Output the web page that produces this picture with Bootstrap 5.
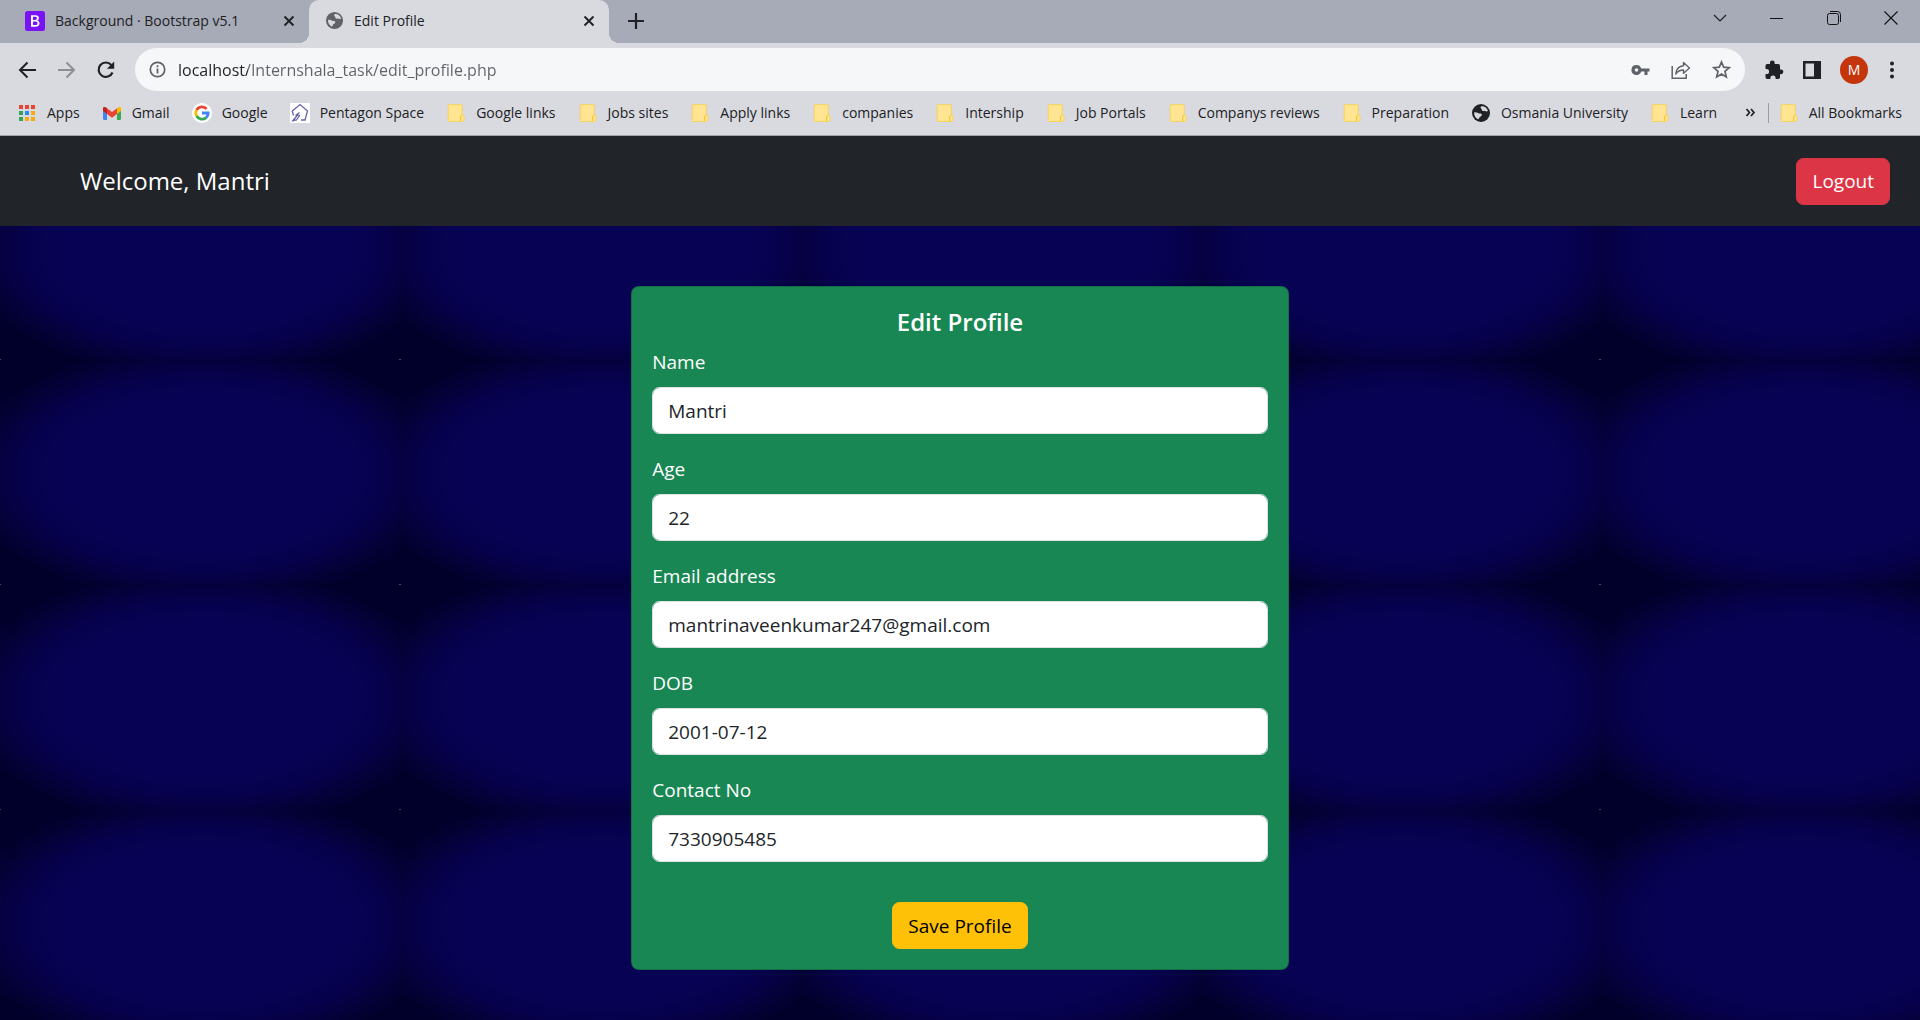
<!DOCTYPE html>
<html lang="en">
<head>
<meta charset="utf-8">
<meta name="viewport" content="width=device-width, initial-scale=1">
<title>Edit Profile</title>
<link href="https://cdn.jsdelivr.net/npm/bootstrap@5.3.0/dist/css/bootstrap.min.css" rel="stylesheet">
<style>
  html { font-size: 20px; }
  body {
    --bs-body-font-family: "Open Sans", "Noto Sans", sans-serif;
    font-size: 19px; line-height: 30px; min-height: 100vh;
  }
  svg { display: block; flex: none; }
  .plain { border: 0; background: none; padding: 0; color: inherit; display: flex; }

  /* tab strip */
  .tabstrip { background: #a7abb7; height: 43px; color: #202124; font-size: 14px; line-height: 20px; }
  .tab { height: 43px; padding: 0 14px 2px 16px; gap: 10px; }
  .tab-idle { width: 309px; padding-left: 25px; }
  .tab-open { width: 300px; background: #d9dae0; border-radius: 10px 10px 0 0; position: relative; }
  .tab-open::before, .tab-open::after {
    content: ""; position: absolute; bottom: 0; width: 10px; height: 10px;
  }
  .tab-open::before { left: -10px; background: radial-gradient(circle at 0 0, #a7abb7 10px, #d9dae0 10px); }
  .tab-open::after { right: -10px; background: radial-gradient(circle at 100% 0, #a7abb7 10px, #d9dae0 10px); }
  .tab a { color: inherit; text-decoration: none; }
  .new-tab { margin-left: 19px; padding-bottom: 2px; }
  .win-controls { gap: 43px; padding: 0 22px 7px 0; }

  /* toolbar */
  .toolbar { background: #d9dae0; height: 49px; padding: 4px 23px 0 18px; color: #202124; }
  .nav-icons { gap: 20px; width: 117px; }
  .omnibox { background: #f5f7f9; height: 43px; border-radius: 22px; padding: 0 14px; color: #5f6368; }
  .url-text {
    border: 0; outline: 0; padding: 0; font-size: 16px; line-height: 24px; margin-left: 12px;
    color: transparent; -webkit-text-fill-color: transparent;
    background: linear-gradient(90deg, #202124 70px, #5f6368 70px);
    -webkit-background-clip: text; background-clip: text;
  }
  .omni-icons { gap: 21px; }
  .side-icons { gap: 19px; margin-left: 19px; }
  .avatar { width: 28px; height: 28px; background: #c5350c; color: #fff; font-size: 14px; line-height: 28px; }

  /* bookmarks */
  .bookmarks { background: #d9dae0; height: 44px; padding: 0 18px 2px 17px; border-bottom: 1px solid #a0a3aa; gap: 22px; }
  .bookmarks a { display: flex; align-items: center; gap: 10px; color: #202124; text-decoration: none; font-size: 14px; line-height: 20px; white-space: nowrap; }
  .bm-rule { width: 1px; height: 20px; background: #9a9da5; }

  /* page */
  .page {
    background-color: #01002b;
    background-image:
      radial-gradient(circle, #45406e 0, #45406e 1px, transparent 1px),
      radial-gradient(230px 124px at center, #080254 62%, #070250 72%, #06014a 80%, #050142 88%, #030136 96%, #01002b 106%);
    background-size: 400px 225px;
    background-position: -200px 111px, 4px 0;
  }
  .topbar { height: 90px; padding: 0 30px 0 80px; }
  .topbar .navbar-brand { font-size: 24px; line-height: 36px; }
  .btn { font-size: 19px; line-height: 30px; }
  .page-body { max-width: 1650px; padding-top: 60px; padding-bottom: 50px; --bs-gutter-x: 30px; }
  .page-body .row { --bs-gutter-x: 30px; }
  .profile { color: #fff; border-radius: 8px; padding: 20px; }
  .profile h5 { font-size: 24px; line-height: 30px; font-weight: 600; margin-bottom: 10px; }
  .profile .form-label { margin-bottom: 10px; display: block; }
  .profile .form-control { font-size: 19px; line-height: 30px; }
</style>
</head>
<body class="d-flex flex-column">
<svg width="0" height="0" class="position-absolute" aria-hidden="true">
  <symbol id="folder" viewBox="0 0 20 20">
    <path d="M3 1.700h12.400q.8 0 .8.8V12q1.800 0 1.800 1.600V17q0 1.500-1.500 1.500H3q-.8 0-.8-.8V2.500q0-.8.8-.8z" fill="#ffe591" stroke="#f6d35c"/>
    <path d="M14.700 18V14q0-1.600 1.400-1.600" fill="none" stroke="#efc02f"/>
  </symbol>
  <symbol id="globe" viewBox="0 0 20 20">
    <circle cx="10" cy="10" r="9" fill="currentColor"/>
    <path d="M10.500 3.200c2.800-.3 5.600 1.600 6.400 4.600-.9.900-1.900.7-2.900.2-1-.6-1.500.4-2.400 0-1-.5-.3-1.500-1.200-2.200-.9-.8-1.200-2.100.1-2.600zM3.200 9.200c1.500.1 2.700 0 3.700.8.700.6 1.900.4 2.800.6 1.300.3 1.400 1.600.6 2.300-.7.7-1.900.7-2 1.800 0 .9-.6 1.400-1.400 1.500-2.400-1.200-4.100-3.900-3.700-7z" fill="#d9dae0"/>
  </symbol>
  <symbol id="cross" viewBox="0 0 12 12"><path d="M1.500 1.500l9 9M10.500 1.500l-9 9" stroke="currentColor" stroke-width="1.900"/></symbol>
</svg>

<header>
  <div class="tabstrip d-flex">
    <div class="tab tab-idle d-flex align-items-center">
      <svg width="20" height="20" viewBox="0 0 20 20"><rect width="20" height="20" rx="2.500" fill="#7a12f8"/><path d="M6 4.200h4.600c2.100 0 3.300 1 3.300 2.700 0 1.300-.8 2.200-2 2.500 1.600.2 2.600 1.300 2.600 2.800 0 2.200-1.500 3.600-4 3.600H6zM8 5.800v3.100h2c1.200 0 1.900-.6 1.900-1.600s-.6-1.500-1.800-1.500zm0 4.600v3.700h2.300c1.400 0 2.200-.6 2.200-1.900 0-1.200-.8-1.800-2.300-1.800z" fill="#fff"/></svg>
      <a href="#" class="flex-grow-1 text-truncate">Background · Bootstrap v5.1</a>
      <button class="plain" aria-label="Close tab"><svg width="12" height="12"><use href="#cross"/></svg></button>
    </div>
    <div class="tab tab-open d-flex align-items-center">
      <svg width="19" height="19" style="color:#5f6368"><use href="#globe"/></svg>
      <a href="#" class="flex-grow-1 text-truncate">Edit Profile</a>
      <button class="plain" aria-label="Close tab"><svg width="12" height="12"><use href="#cross"/></svg></button>
    </div>
    <button class="plain new-tab align-items-center" aria-label="New tab"><svg width="16" height="16" viewBox="0 0 16 16"><path d="M8 0v16M0 8h16" stroke="#202124" stroke-width="2.200"/></svg></button>
    <div class="win-controls d-flex align-items-center ms-auto">
      <button class="plain" aria-label="Search tabs"><svg width="14" height="14" viewBox="0 0 14 14"><path d="M1 4l6 6 6-6" fill="none" stroke="#202124" stroke-width="1.200"/></svg></button>
      <button class="plain" aria-label="Minimize"><svg width="14" height="14" viewBox="0 0 14 14"><path d="M0 7.500h13" stroke="#111"/></svg></button>
      <button class="plain" aria-label="Restore"><svg width="14" height="14" viewBox="0 0 14 14"><rect x=".5" y="2.500" width="11" height="11" rx="2" fill="none" stroke="#111"/><path d="M3 .5h7.500q3 0 3 3V11" fill="none" stroke="#111"/></svg></button>
      <button class="plain" aria-label="Close"><svg width="14" height="14" viewBox="0 0 14 14"><path d="M.5.5l13 13M13.500.5l-13 13" stroke="#111" stroke-width="1.100"/></svg></button>
    </div>
  </div>

  <div class="toolbar d-flex align-items-center">
    <div class="nav-icons d-flex align-items-center">
      <button class="plain" aria-label="Back"><svg width="19" height="18" viewBox="0 0 19 18"><path d="M18 9H2.500M9.500 1.500L2 9l7.500 7.500" fill="none" stroke="#202124" stroke-width="2"/></svg></button>
      <button class="plain" aria-label="Forward"><svg width="19" height="18" viewBox="0 0 19 18"><path d="M1 9h15.500M9.500 1.500L17 9l-7.500 7.500" fill="none" stroke="#8d8f95" stroke-width="2"/></svg></button>
      <button class="plain" aria-label="Reload"><svg width="20" height="20" viewBox="0 0 20 20"><path d="M16.500 12.500A7.200 7.200 0 1 1 15.300 5" fill="none" stroke="#202124" stroke-width="2.200"/><path d="M18.200 1.500v7.300h-7.300z" fill="#202124"/></svg></button>
    </div>
    <div class="omnibox d-flex align-items-center flex-grow-1">
      <svg width="17" height="17" viewBox="0 0 17 17"><circle cx="8.500" cy="8.500" r="7.200" fill="none" stroke="#5f6368" stroke-width="1.700"/><path d="M8.500 7.500v5M8.500 4.300v1.900" stroke="#5f6368" stroke-width="1.800"/></svg>
      <input class="url-text flex-grow-1" type="text" aria-label="Address" value="localhost/Internshala_task/edit_profile.php">
      <div class="omni-icons d-flex align-items-center">
        <button class="plain" aria-label="Passwords"><svg width="19" height="12" viewBox="0 0 19 12"><path d="M5.500 1a5 5 0 1 0 4.700 6.600h3.300V11h3V7.600H18.500V4.400h-8.300A5 5 0 0 0 5.500 1zm0 3.200a1.800 1.800 0 1 1 0 3.600 1.800 1.800 0 0 1 0-3.600z" fill="#5f6368"/></svg></button>
        <button class="plain" aria-label="Share"><svg width="20" height="20" viewBox="0 0 20 20"><path d="M1.200 6v12.300h14V14" fill="none" stroke="#5f6368" stroke-width="1.500"/><path d="M12.500 2.500v3.300C8 6.200 5.300 9 4.700 14c2-2.800 4.400-4 7.800-4v3.300L18.500 8z" fill="none" stroke="#5f6368" stroke-width="1.400" stroke-linejoin="round"/></svg></button>
        <button class="plain" aria-label="Bookmark"><svg width="19" height="19" viewBox="0 0 19 19"><path d="M9.500 2l2.200 5.200 5.600.5-4.300 3.700 1.300 5.500-4.800-2.900-4.800 2.900L6 11.400 1.700 7.700l5.600-.5z" fill="none" stroke="#5f6368" stroke-width="1.700"/></svg></button>
      </div>
    </div>
    <div class="side-icons d-flex align-items-center">
      <button class="plain" aria-label="Extensions"><svg width="20" height="20" viewBox="0 0 20 20"><path d="M17 9.500h-1V5.800Q16 4 14.200 4h-3.500V3a2.400 2.400 0 0 0-4.800 0v1H3.200Q1.500 4 1.500 5.800v3.100h1a2.600 2.600 0 0 1 0 5.200h-1v3.200Q1.500 19 3.200 19h3.200v-1a2.600 2.600 0 0 1 5.200 0v1h2.600q1.800 0 1.800-1.700v-3.100h1a2.350 2.350 0 0 0 0-4.700z" fill="#202124"/></svg></button>
      <button class="plain" aria-label="Side panel"><svg width="18" height="18" viewBox="0 0 18 18"><path d="M0 0h18v18H0zM2.500 2.500v13h8.500v-13z" fill="#202124" fill-rule="evenodd"/></svg></button>
      <button class="plain avatar rounded-circle justify-content-center" aria-label="Account">M</button>
      <button class="plain" aria-label="Menu"><svg width="10" height="18" viewBox="0 0 10 18" fill="#202124"><circle cx="5" cy="2.500" r="2"/><circle cx="5" cy="9" r="2"/><circle cx="5" cy="15.500" r="2"/></svg></button>
    </div>
  </div>

  <nav class="bookmarks d-flex align-items-center" aria-label="Bookmarks">
    <a href="#"><svg width="20" height="20" viewBox="0 0 20 20"><g fill="#ea4335"><path d="M2 2h4v4H2zM8 2h4v4H8zM14 2h4v4h-4z"/></g><path d="M2 8h4v4H2zM2 14h4v4H2z" fill="#34a05a"/><path d="M8 8h4v4H8z" fill="#2a8bf5"/><path d="M14 8h4v4h-4zM8 14h4v4H8zM14 14h4v4h-4z" fill="#f9ab12"/></svg>Apps</a>
    <a href="#"><svg width="20" height="20" viewBox="0 0 20 20"><path d="M1 5v10.500q0 1.500 1.500 1.500H5V8z" fill="#4285f4"/><path d="M19 5v10.500q0 1.500-1.500 1.500H15V8z" fill="#34a853"/><path d="M1 5.200V8l4 3V5.300l-1-.8C2.700 3.600 1 4 1 5.200z" fill="#c5221f"/><path d="M19 5.200V8l-4 3V5.300l1-.8c1.300-.9 3-.5 3 .7z" fill="#fbbc04"/><path d="M5 5.300l5 3.800 5-3.800V11l-5 3.800L5 11z" fill="#ea4335"/></svg>Gmail</a>
    <a href="#"><svg width="20" height="20" viewBox="0 0 20 20"><circle cx="10" cy="10" r="10" fill="#fff"/><g fill="none" stroke-width="2.800"><path d="M14.600 5.900A6.200 6.200 0 0 0 4.600 7" stroke="#ea4335"/><path d="M4.600 7a6.200 6.200 0 0 0 0 6" stroke="#fbbc05"/><path d="M4.600 13a6.200 6.200 0 0 0 9.500 1.600" stroke="#34a853"/><path d="M14.100 14.600A6 6 0 0 0 16.200 10H10" stroke="#4285f4"/></g></svg>Google</a>
    <a href="#"><svg width="20" height="20" viewBox="0 0 20 20"><path d="M0 0h20v20H0z" fill="#fff"/><path d="M3.500 12.500L2.300 8 10 1.500 17.500 8 15 17h-4M3 17.500l5-6 1.500 1.200-3 4.300zM5.500 12.500l4-3M3 18.500l2.500-4" fill="none" stroke="#6a62a8" stroke-width="1.300"/></svg>Pentagon Space</a>
    <a href="#"><svg width="20" height="20"><use href="#folder"/></svg>Google links</a>
    <a href="#"><svg width="20" height="20"><use href="#folder"/></svg>Jobs sites</a>
    <a href="#"><svg width="20" height="20"><use href="#folder"/></svg>Apply links</a>
    <a href="#"><svg width="20" height="20"><use href="#folder"/></svg>companies</a>
    <a href="#"><svg width="20" height="20"><use href="#folder"/></svg>Intership</a>
    <a href="#"><svg width="20" height="20"><use href="#folder"/></svg>Job Portals</a>
    <a href="#"><svg width="20" height="20"><use href="#folder"/></svg>Companys reviews</a>
    <a href="#"><svg width="20" height="20"><use href="#folder"/></svg>Preparation</a>
    <a href="#"><svg width="20" height="20"><use href="#globe"/></svg>Osmania University</a>
    <a href="#"><svg width="20" height="20"><use href="#folder"/></svg>Learn</a>
    <div class="d-flex align-items-center ms-auto gap-2">
      <button class="plain" aria-label="More bookmarks"><svg width="14" height="12" viewBox="0 0 14 12"><path d="M2.500 2l3 3.500-3 3.500M7 2l3 3.500L7 9" fill="none" stroke="#202124" stroke-width="1.700"/></svg></button>
      <span class="bm-rule"></span>
      <a href="#"><svg width="20" height="20"><use href="#folder"/></svg>All Bookmarks</a>
    </div>
  </nav>
</header>

<div class="page flex-grow-1">
  <nav class="topbar navbar navbar-dark bg-dark d-flex justify-content-between">
    <a class="navbar-brand m-0" href="#">Welcome, Mantri</a>
    <button class="btn btn-danger" type="button">Logout</button>
  </nav>
  <main class="page-body container-fluid">
    <div class="row justify-content-center">
      <div class="col-5">
        <form class="profile card bg-success">
          <h5 class="text-center">Edit Profile</h5>
          <div class="mb-3">
            <label class="form-label" for="name">Name</label>
            <input class="form-control" id="name" type="text" value="Mantri">
          </div>
          <div class="mb-3">
            <label class="form-label" for="age">Age</label>
            <input class="form-control" id="age" type="text" value="22">
          </div>
          <div class="mb-3">
            <label class="form-label" for="email">Email address</label>
            <input class="form-control" id="email" type="email" value="mantrinaveenkumar247@gmail.com">
          </div>
          <div class="mb-3">
            <label class="form-label" for="dob">DOB</label>
            <input class="form-control" id="dob" type="text" value="2001-07-12">
          </div>
          <div class="mb-3">
            <label class="form-label" for="contact">Contact No</label>
            <input class="form-control" id="contact" type="text" value="7330905485">
          </div>
          <div class="text-center mt-3">
            <button class="btn btn-warning" type="submit">Save Profile</button>
          </div>
        </form>
      </div>
    </div>
  </main>
</div>
<script src="https://cdn.jsdelivr.net/npm/bootstrap@5.3.0/dist/js/bootstrap.bundle.min.js"></script>
</body>
</html>
